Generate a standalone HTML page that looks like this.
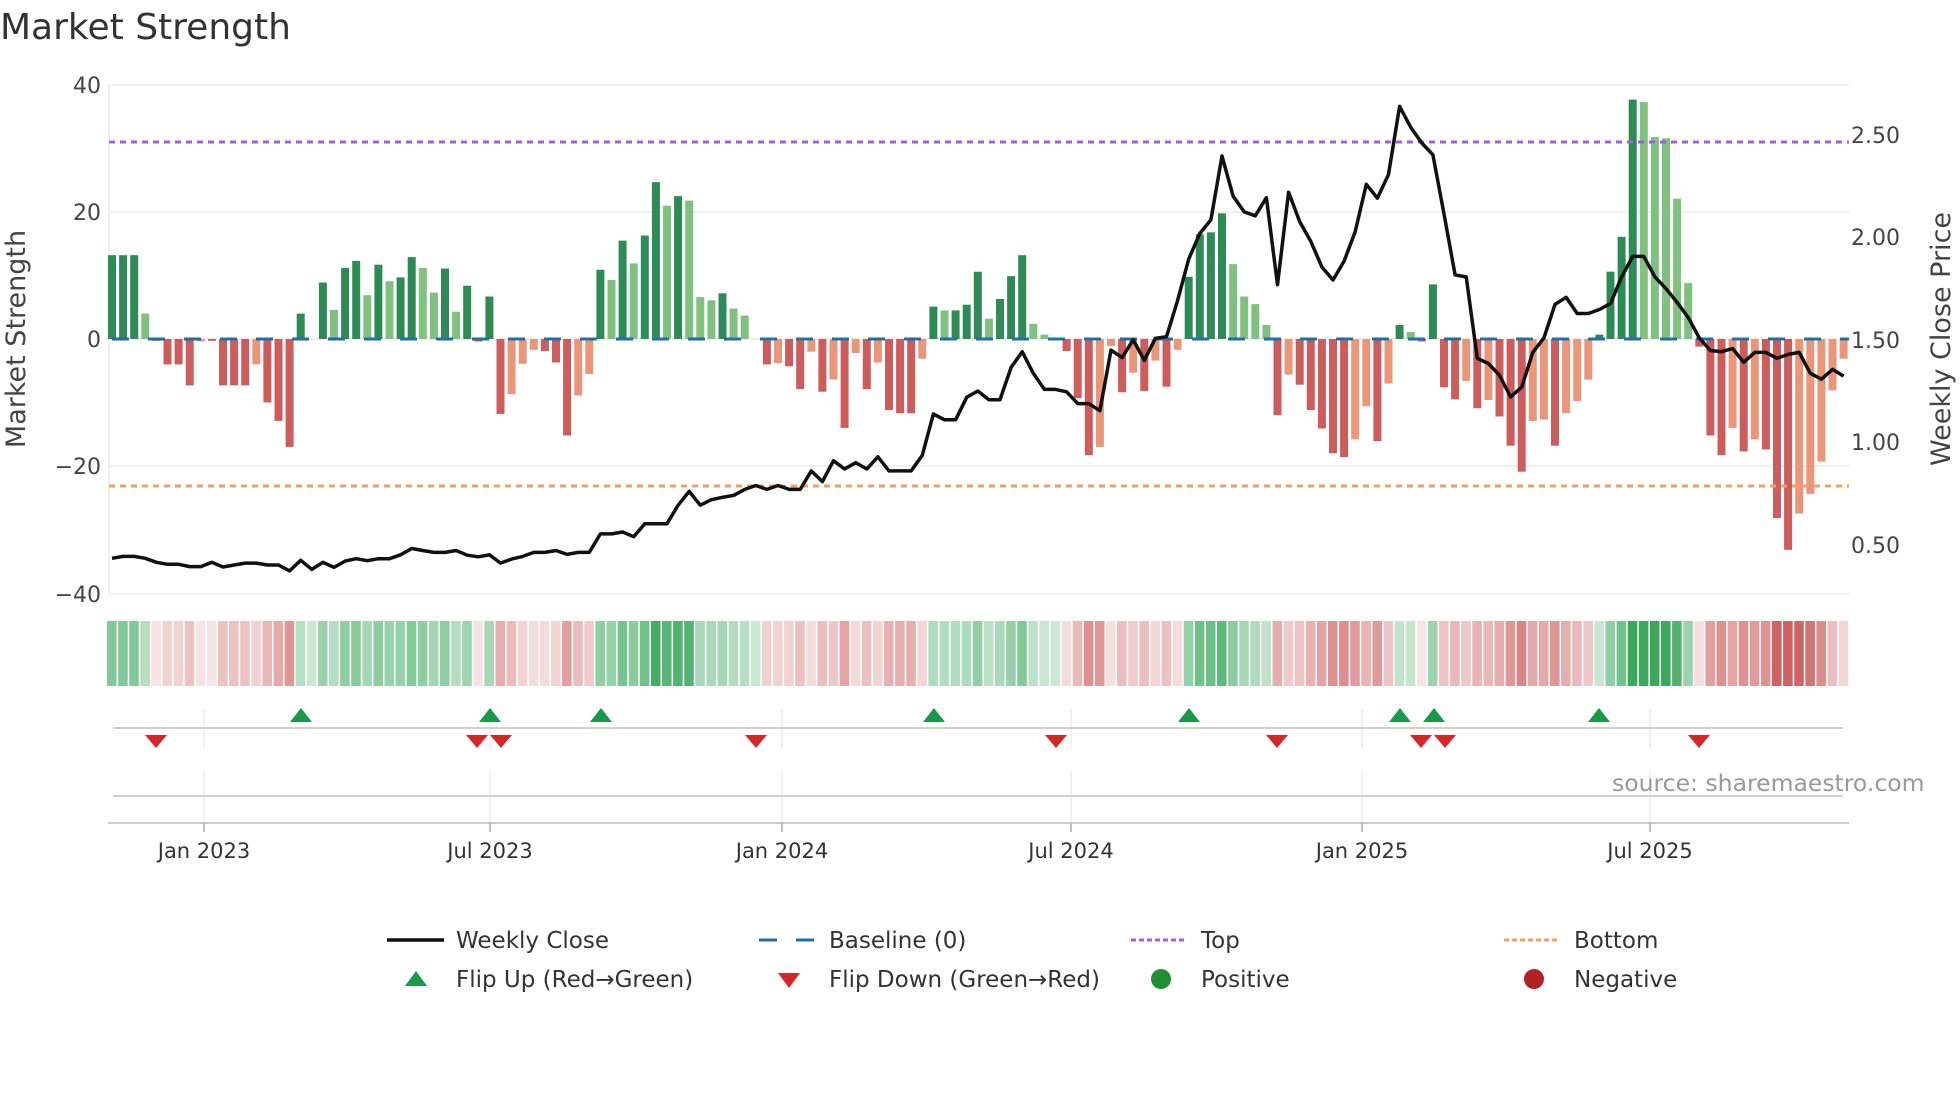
<!DOCTYPE html>
<html><head><meta charset="utf-8"><style>
html,body{margin:0;padding:0;background:#fff;width:1960px;height:1102px;overflow:hidden}
svg{display:block}
text{font-family:"DejaVu Sans","Liberation Sans",sans-serif}
</style></head><body>
<svg id="s" width="1960" height="1102" viewBox="0 0 1960 1102" xmlns="http://www.w3.org/2000/svg">
<text x="0" y="39" font-size="36" fill="#333">Market Strength</text>
<g stroke="#ececec" stroke-width="1.5">
<line x1="109" y1="85" x2="1849" y2="85"/><line x1="109" y1="212" x2="1849" y2="212"/>
<line x1="109" y1="339" x2="1849" y2="339"/><line x1="109" y1="466" x2="1849" y2="466"/>
<line x1="109" y1="594" x2="1849" y2="594"/><line x1="109" y1="85" x2="109" y2="594"/>
</g>
<g font-size="22" fill="#444" text-anchor="end">
<text x="101" y="93">40</text><text x="101" y="220">20</text><text x="101" y="347">0</text>
<text x="101" y="474">−20</text><text x="101" y="602">−40</text>
</g>
<g font-size="22" fill="#444">
<text x="1851" y="143">2.50</text><text x="1851" y="245">2.00</text><text x="1851" y="348">1.50</text>
<text x="1851" y="450">1.00</text><text x="1851" y="553">0.50</text>
</g>
<text transform="translate(25,339) rotate(-90)" font-size="27" fill="#444" text-anchor="middle">Market Strength</text>
<text transform="translate(1950,339) rotate(-90)" font-size="27" fill="#444" text-anchor="middle">Weekly Close Price</text>
<g id="bars"></g>
<line x1="112" y1="339" x2="1849" y2="339" stroke="#1f6fa8" stroke-width="3" stroke-dasharray="17 19"/>
<line x1="109" y1="142" x2="1849" y2="142" stroke="#a45ee0" stroke-width="3" stroke-dasharray="6 5"/>
<line x1="109" y1="486" x2="1849" y2="486" stroke="#f0a060" stroke-width="3" stroke-dasharray="6 5"/>
<polyline id="price" fill="none" stroke="#111" stroke-width="3.5" stroke-linejoin="round"/>
<g id="heat"></g>
<g stroke="#e8e8e8" stroke-width="1.2">
<line x1="204" y1="709" x2="204" y2="748"/><line x1="490" y1="709" x2="490" y2="748"/><line x1="782" y1="709" x2="782" y2="748"/>
<line x1="1071" y1="709" x2="1071" y2="748"/><line x1="1362" y1="709" x2="1362" y2="748"/><line x1="1650" y1="709" x2="1650" y2="748"/>
<line x1="204" y1="770" x2="204" y2="823"/><line x1="490" y1="770" x2="490" y2="823"/><line x1="782" y1="770" x2="782" y2="823"/>
<line x1="1071" y1="770" x2="1071" y2="823"/><line x1="1362" y1="770" x2="1362" y2="823"/><line x1="1650" y1="770" x2="1650" y2="823"/>
</g>
<line x1="113" y1="728" x2="1843" y2="728" stroke="#d0d0d0" stroke-width="2"/>
<line x1="113" y1="796" x2="1843" y2="796" stroke="#d0d0d0" stroke-width="2"/>
<line x1="108" y1="823" x2="1849" y2="823" stroke="#ccc" stroke-width="2"/>
<g stroke="#aaa" stroke-width="1.5">
<line x1="204" y1="823" x2="204" y2="832"/><line x1="490" y1="823" x2="490" y2="832"/><line x1="782" y1="823" x2="782" y2="832"/>
<line x1="1071" y1="823" x2="1071" y2="832"/><line x1="1362" y1="823" x2="1362" y2="832"/><line x1="1650" y1="823" x2="1650" y2="832"/>
</g>
<g id="flips"></g>
<text x="1612" y="791" font-size="23.5" fill="#999">source: sharemaestro.com</text>
<g font-size="21" fill="#333" text-anchor="middle">
<text x="204" y="858">Jan 2023</text><text x="490" y="858">Jul 2023</text><text x="782" y="858">Jan 2024</text>
<text x="1071" y="858">Jul 2024</text><text x="1362" y="858">Jan 2025</text><text x="1650" y="858">Jul 2025</text>
</g>
<g font-size="23" fill="#333">
<line x1="387" y1="940" x2="444" y2="940" stroke="#111" stroke-width="3.5"/>
<text x="456" y="948">Weekly Close</text>
<line x1="759" y1="940" x2="777" y2="940" stroke="#1f6fa8" stroke-width="3"/>
<line x1="796" y1="940" x2="814" y2="940" stroke="#1f6fa8" stroke-width="3"/>
<text x="829" y="948">Baseline (0)</text>
<line x1="1131" y1="940" x2="1187" y2="940" stroke="#a45ee0" stroke-width="3" stroke-dasharray="5 3"/>
<text x="1201" y="948">Top</text>
<line x1="1504" y1="940" x2="1560" y2="940" stroke="#f0a060" stroke-width="3" stroke-dasharray="5 3"/>
<text x="1574" y="948">Bottom</text>
<polygon points="405,986 427,986 416,971" fill="#1a9a48"/>
<text x="456" y="987">Flip Up (Red→Green)</text>
<polygon points="778,973 800,973 789,988" fill="#d62728"/>
<text x="829" y="987">Flip Down (Green→Red)</text>
<circle cx="1161" cy="979" r="10" fill="#1f8f2f"/>
<text x="1201" y="987">Positive</text>
<circle cx="1534" cy="979" r="10" fill="#b22222"/>
<text x="1574" y="987">Negative</text>
</g>
</svg>
<script>
var V="13.2D 13.2D 13.2D 4L -0.3R -4R -4R -7.3R -0.4O -0.3R -7.3R -7.3R -7.3R -4O -10R -12.9R -17R 4D 0D 8.9D 4.6L 11.2D 12.3D 6.9L 11.7D 9.1L 9.7D 12.9D 11.2L 7.3L 11.1D 4.3L 8.4D -0.4R 6.7D -11.8R -8.7O -3.9O -1.7O -1.9R -3.7R -15.2R -8.9O -5.5O 10.9D 9.3L 15.5D 11.9L 16.3D 24.7D 21L 22.5D 21.8L 6.6L 6.1L 7.2D 4.8L 3.7L 0D -4R -3.8O -4.3R -7.9R -2O -8.3R -6.4O -14R -2.2O -7.9R -3.7O -11.2R -11.7R -11.7R -3.1O 5.1D 4.5L 4.5D 5.4D 10.6D 3.2L 6.3D 9.9D 13.2D 2.4L 0.7L 0D -1.9R -9.3R -18.3R -17O -1.1O -8.4R -5.3O -8.2R -3.4O -7.5R -1.7O 9.8D 16.5D 16.8D 19.8D 11.8L 6.7L 5.5L 2.2L -12R -5.6O -7.2R -11.2R -14.1R -18R -18.6R -15.8O -10.6O -16.1R -7O 2.2D 1.1L -0.4R 8.6D -7.6R -9.5R -6.6O -10.9R -9.6O -12.2R -16.8R -20.9R -12.9O -12.7O -16.8R -11.7O -9.8O -6.4O 0.7D 10.6D 16.1D 37.7D 37.3L 31.8L 31.6L 22.1L 8.8L -1.2R -15.2R -18.3R -14O -17.7R -15.8O -17.4R -28.2R -33.2R -27.5O -24.4O -19.3O -8.1O -3.1O".split(" ");
var P=[1215,1210,1210,1215,1225,1230,1230,1236,1236,1225,1237,1232,1227,1227,1232,1232,1247,1220,1243,1225,1238,1222,1216,1221,1216,1216,1206,1190,1195,1200,1200,1195,1207,1211,1206,1227,1217,1210,1200,1200,
1195,1205,1200,1200,1153,1153,1148,1160,1127,1127,1127,1080,1045,1080,1066,1060,1055,1040,1030,1040,1030,1040,1040,993,1020,967,988,972,988,957,993,993,993,953,848,863,863,806,790,
812,812,730,690,745,786,786,792,822,822,840,686,705,660,712,656,652,560,455,390,355,193,295,335,345,299,520,285,360,410,475,508,460,385,265,300,240,67,120,
160,190,340,495,500,707,720,750,805,780,692,655,570,552,593,593,583,568,500,448,448,500,530,565,603,655,687,690,682,717,692,692,707,697,692,745,760,735,752];
var NS="http://www.w3.org/2000/svg",bars=document.getElementById("bars"),heat=document.getElementById("heat");
var col={D:"#2e8b57",L:"#80c080",R:"#cd5c5c",O:"#e9967a"};
function mk(t,a,p){var e=document.createElementNS(NS,t);for(var k in a)e.setAttribute(k,a[k]);p.appendChild(e);return e;}
function mix(c,t){var r=Math.round(255+(c[0]-255)*t),g=Math.round(255+(c[1]-255)*t),b=Math.round(255+(c[2]-255)*t);return "rgb("+r+","+g+","+b+")";}
var pts=[];
for(var i=0;i<V.length;i++){
 var s=V[i],ty=s.slice(-1),v=parseFloat(s),x=112+i*11.1;
 var h=Math.abs(v)*6.35; if(v!==0){mk("rect",{x:(x-4).toFixed(1),y:(v>0?339-h:339).toFixed(1),width:8,height:Math.max(h,1.5).toFixed(1),fill:col[ty]},bars);}
 var t;
 if(v>=0){t=Math.min(0.95,0.25+Math.abs(v)/38);mk("rect",{x:(x-5).toFixed(1),y:621,width:9.6,height:65,fill:mix([49,163,84],t)},heat);}
 else{t=Math.min(0.9,0.15+Math.abs(v)/38);mk("rect",{x:(x-5).toFixed(1),y:621,width:9.6,height:65,fill:mix([200,80,80],t)},heat);}
 if(i<P.length)pts.push(x.toFixed(1)+","+(80+P[i]/2.54).toFixed(1));
}
document.getElementById("price").setAttribute("points",pts.join(" "));
var fl=document.getElementById("flips");
[301,490,601,934,1189,1400,1434,1599].forEach(function(x){mk("polygon",{points:(x-11)+",722 "+(x+11)+",722 "+x+",708",fill:"#1a9a48"},fl);});
[156,477,501,756,1056,1277,1421,1445,1699].forEach(function(x){mk("polygon",{points:(x-11)+",735 "+(x+11)+",735 "+x+",748",fill:"#d62728"},fl);});
</script>
</body></html>
